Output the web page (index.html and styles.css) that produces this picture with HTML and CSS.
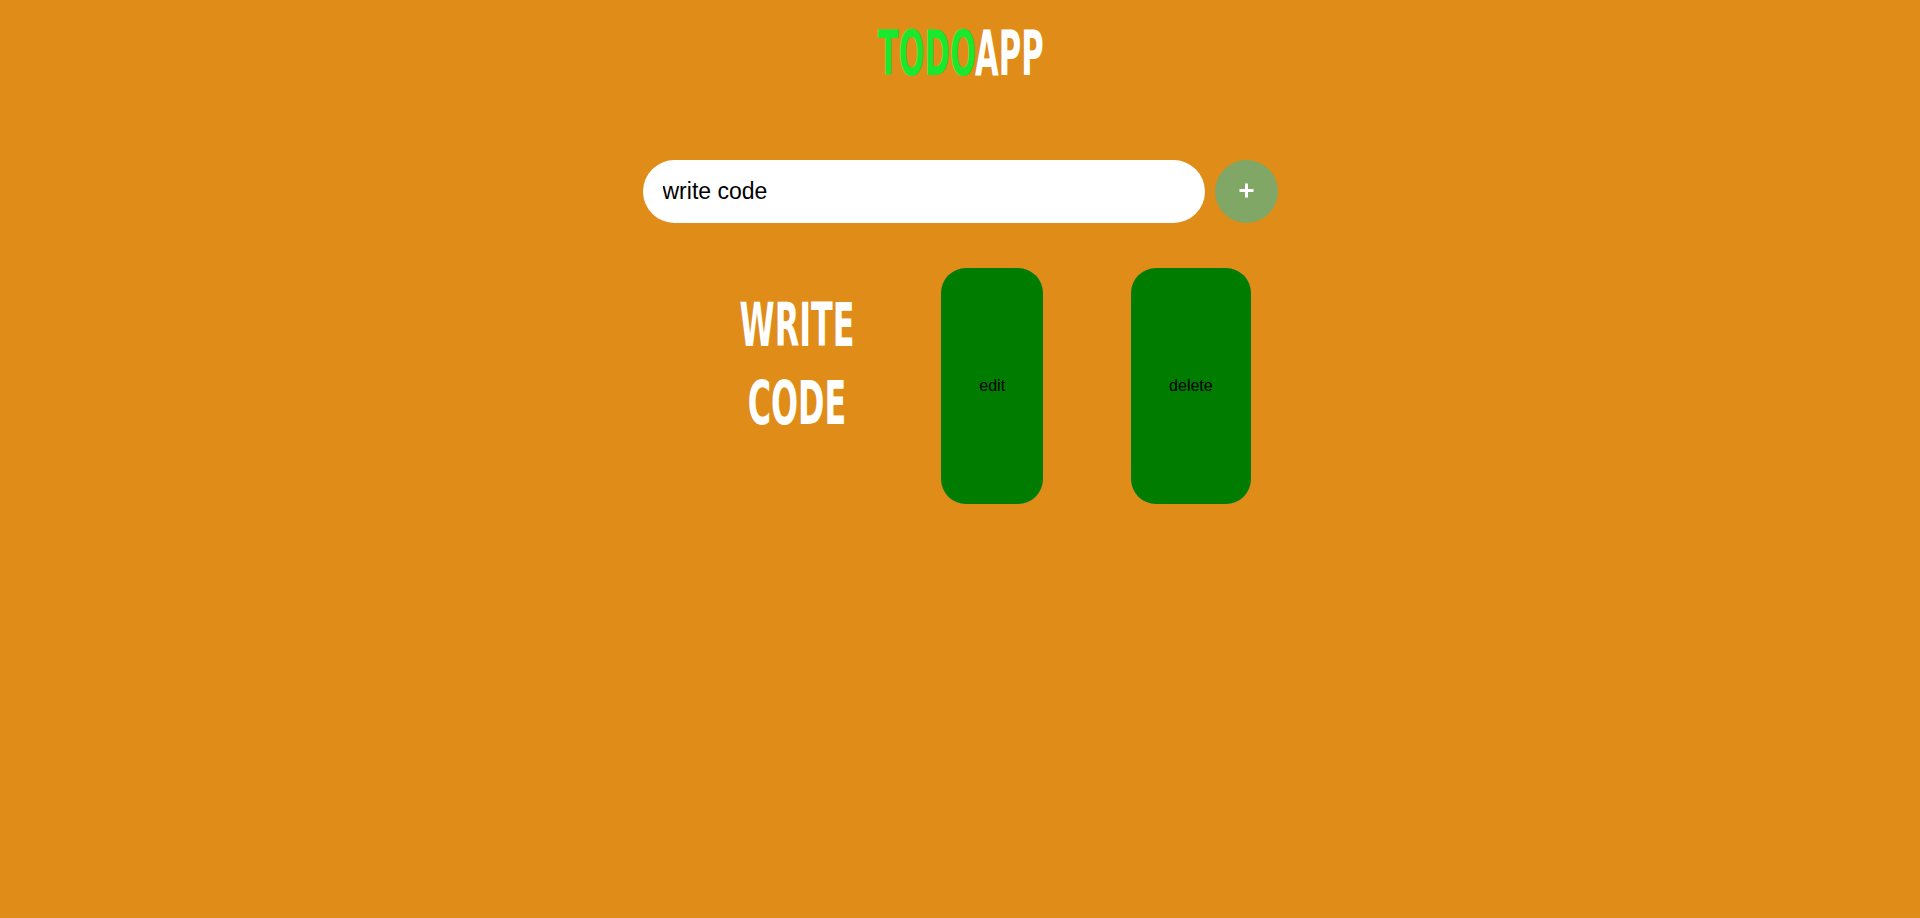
FILE: index.html
```html
<!DOCTYPE html>
<html lang="en">
<head>
<meta charset="utf-8">
<title>Todo App</title>
<link rel="stylesheet" href="styles.css">
</head>
<body>
  <header class="header">
    <h1 class="title"><span class="title-text"><span class="title-todo">TODO</span>APP</span></h1>
  </header>
  <form class="todo-form">
    <input class="todo-input" type="text" value="write code">
    <button class="add-btn" type="button" aria-label="add">
      <svg width="15" height="15" viewBox="0 0 15 15"><path d="M7.5 0.5v14M0.5 7.5h14" stroke="#fff" stroke-width="3" fill="none"/></svg>
    </button>
  </form>
  <ul class="todo-list">
    <li class="todo-item">
      <div class="todo-text-wrap"><span class="todo-text">WRITE CODE</span></div>
      <button class="todo-btn" type="button">edit</button>
      <button class="todo-btn" type="button">delete</button>
    </li>
  </ul>
</body>
</html>
```
FILE: styles.css
```css
html, body {
  margin: 0;
  padding: 0;
}
body {
  background: #df8c19;
  font-family: "Liberation Sans", Arial, sans-serif;
  min-height: 918px;
}
.header {
  padding-top: 22px;
}
.title {
  margin: 0;
  padding-left: 2px;
  text-align: center;
  font-family: "Liberation Sans Narrow", "DejaVu Sans Condensed", "Liberation Sans", sans-serif;
  font-weight: bold;
  font-size: 63px;
  line-height: 63px;
  color: #fff;
}
.title-text {
  display: inline-block;
  transform: scaleX(0.54);
}
.title-todo {
  color: #1ae82e;
}
.todo-form {
  margin-top: 75px;
  display: flex;
  justify-content: center;
  gap: 10px;
}
.todo-input {
  box-sizing: border-box;
  width: 562px;
  height: 63px;
  border: none;
  border-radius: 32px;
  padding: 0 20px;
  font-family: "Liberation Sans", Arial, sans-serif;
  font-size: 23px;
  color: #000;
  background: #fff;
  outline: none;
}
.add-btn {
  width: 63px;
  height: 63px;
  border: none;
  border-radius: 50%;
  background: #80a766;
  padding: 0;
  display: flex;
  align-items: center;
  justify-content: center;
  padding-bottom: 3px;
}
.todo-list {
  list-style: none;
  margin: 45px 0 0;
  padding: 0;
}
.todo-item {
  display: flex;
  justify-content: center;
  align-items: flex-start;
  gap: 88px;
  padding-left: 72px;
}
.todo-text-wrap {
  width: 112px;
  display: flex;
  justify-content: center;
  margin-top: 18px;
}
.todo-text {
  flex: none;
  width: 200px;
  text-align: center;
  font-family: "Liberation Sans Narrow", "DejaVu Sans Condensed", "Liberation Sans", sans-serif;
  font-weight: bold;
  font-size: 60px;
  line-height: 78px;
  color: #fff;
  transform: scaleX(0.59);
}
.todo-btn {
  height: 236px;
  padding: 0 38px;
  border: none;
  border-radius: 25px;
  background: #007d00;
  color: #000;
  font-family: "Liberation Sans", Arial, sans-serif;
  font-size: 16px;
}
```
